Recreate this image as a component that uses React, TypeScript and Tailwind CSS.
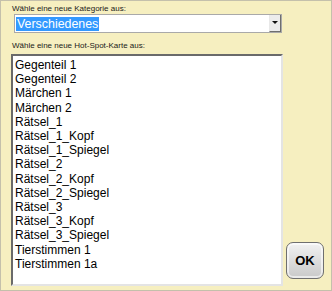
const karten = [
  'Gegenteil 1',
  'Gegenteil 2',
  'Märchen 1',
  'Märchen 2',
  'Rätsel_1',
  'Rätsel_1_Kopf',
  'Rätsel_1_Spiegel',
  'Rätsel_2',
  'Rätsel_2_Kopf',
  'Rätsel_2_Spiegel',
  'Rätsel_3',
  'Rätsel_3_Kopf',
  'Rätsel_3_Spiegel',
  'Tierstimmen 1',
  'Tierstimmen 1a',
];

export default function App() {
  return (
    <div className="h-[291px] w-[332px] border border-[#c4c0ab] bg-[#f6efc0] pl-[11px] pt-[3px] font-['Liberation_Sans',Arial,sans-serif] text-black">
      <p className="h-[9px] text-[8px] leading-[9px] text-[#1a1a1a]">Wähle eine neue Kategorie aus:</p>

      <div className="ml-[2px] mt-px flex h-[19px] w-[268px] border border-[#a9a9a9] bg-white">
        <div className="flex flex-1 items-center pl-px">
          <span className="bg-[#3399ff] px-px text-[12.4px] leading-[14px] text-white">Verschiedenes</span>
        </div>
        <div className="flex w-[12px] items-center justify-center border-b border-l border-r border-l-[#e8e8e8] border-b-[#6e6e6e] border-r-[#6e6e6e] bg-[#ececec]">
          <svg width="6" height="4" viewBox="0 0 6 4">
            <path d="M0 0h6L3 3z" fill="#111" />
          </svg>
        </div>
      </div>

      <p className="mt-[8px] h-[9px] text-[8px] leading-[9px] text-[#1a1a1a]">Wähle eine neue Hot-Spot-Karte aus:</p>

      <div className="-ml-px mt-[4px] flex">
        <ul className="h-[232px] w-[272px] border-2 border-b-[#e4e4e4] border-l-[#6a6a6a] border-r-[#e4e4e4] border-t-[#6a6a6a] bg-white pl-[2px] pt-[2px] text-[12px] leading-[14.2px]">
          {karten.map((k) => (
            <li key={k}>{k}</li>
          ))}
        </ul>
        <button className="mb-[7px] ml-[3px] flex h-[37px] w-[38px] items-center justify-center self-end rounded-[7px] border border-[#6f6f6f] bg-gradient-to-b from-[#f2f2f2] to-[#c9c9c9] text-[13px] font-bold shadow-[inset_0_0_0_2px_rgba(255,255,255,0.6)]">
          OK
        </button>
      </div>
    </div>
  );
}
